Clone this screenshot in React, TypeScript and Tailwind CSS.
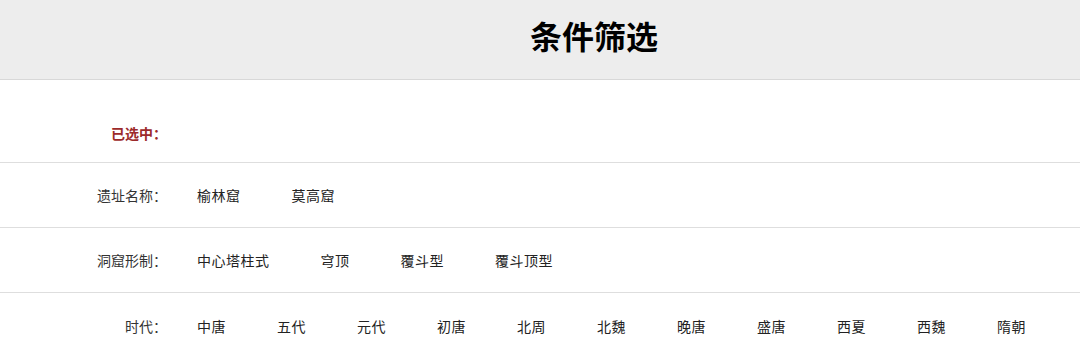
import React from "react";

const font = { fontFamily: '"Noto Sans CJK SC", "Noto Sans", sans-serif' };

const rows: { label: string; items: string[] }[] = [
  { label: "遗址名称：", items: ["榆林窟", "莫高窟"] },
  { label: "洞窟形制：", items: ["中心塔柱式", "穹顶", "覆斗型", "覆斗顶型"] },
  {
    label: "时代：",
    items: ["中唐", "五代", "元代", "初唐", "北周", "北魏", "晚唐", "盛唐", "西夏", "西魏", "隋朝"],
  },
];

export default function App() {
  return (
    <div className="w-[1080px] h-[354px] bg-white overflow-hidden" style={font}>
      <div className="h-[80px] bg-[#ededed] border-b border-[#d8d8d8] flex items-center justify-center pl-[108px] pb-[10px]">
        <h1 className="text-[32px] leading-[40px] font-bold text-black">条件筛选</h1>
      </div>
      <div className="h-[83px] border-b border-[#dedede] flex items-start pt-[43px]">
        <div className="w-[167px] text-right text-[14px] leading-[20px] font-semibold text-[#9c2a2a]">已选中：</div>
      </div>
      {rows.map((r, i) => (
        <div
          key={r.label}
          className={`h-[65px] flex items-center ${i < rows.length - 1 ? "border-b border-[#dedede]" : ""}`}
        >
          <div className="w-[167px] shrink-0 text-right text-[14px] leading-[20px] text-[#333333]">{r.label}</div>
          <div className="flex gap-[51px] pl-[30px] text-[14px] leading-[20px] tracking-[0.5px] text-[#222222]">
            {r.items.map((it) => (
              <span key={it} className="whitespace-nowrap">{it}</span>
            ))}
          </div>
        </div>
      ))}
    </div>
  );
}
